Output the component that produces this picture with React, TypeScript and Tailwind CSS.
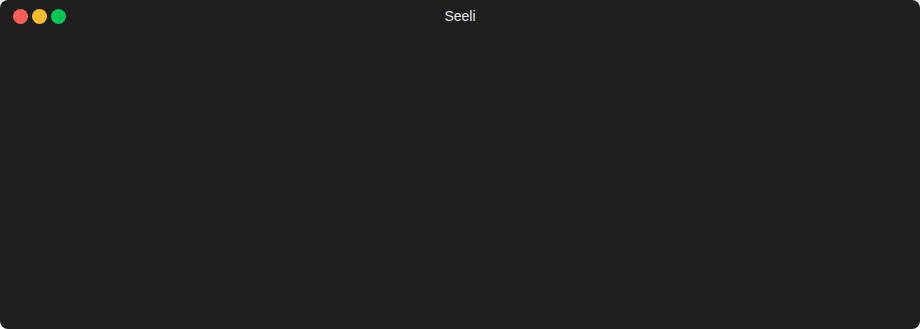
import React from 'react';

const App = () => {
  return (
    <div className="w-[920px] h-[329px] bg-white">
      <div className="w-full h-full rounded-[8px] bg-[#1e1e1e] overflow-hidden flex flex-col">
        {/* Title bar */}
        <div className="relative h-[33px] flex items-center px-[13px]">
          <div className="flex items-center gap-[4px]">
            <span className="w-[15px] h-[15px] rounded-full bg-[#ff5f57]" />
            <span className="w-[15px] h-[15px] rounded-full bg-[#febc2e]" />
            <span className="w-[15px] h-[15px] rounded-full bg-[#00c853]" />
          </div>
          <div className="absolute inset-0 flex items-center justify-center text-[14px] text-[#e6e6e6] font-['Liberation_Sans',sans-serif] pointer-events-none">
            Seeli
          </div>
        </div>
        <div className="flex-1" />
      </div>
    </div>
  );
};

export default App;
